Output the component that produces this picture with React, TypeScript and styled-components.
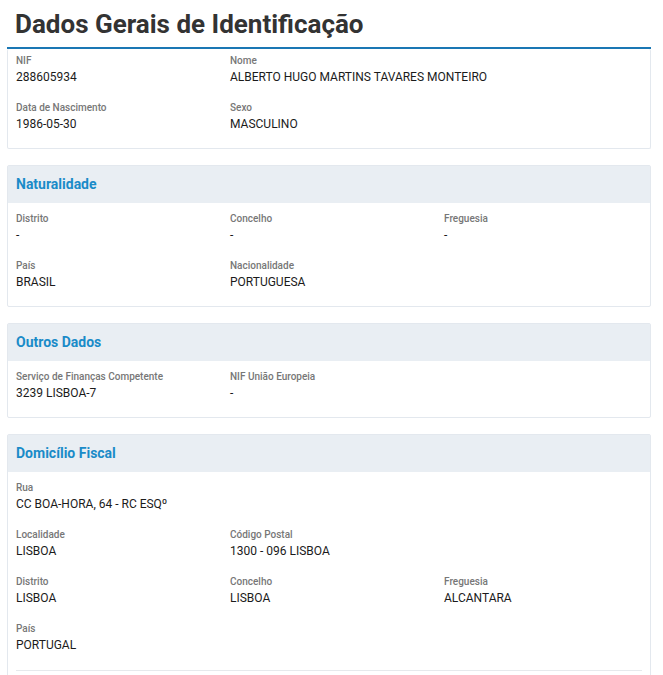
import React from "react";
import styled, { createGlobalStyle } from "styled-components";

const Global = createGlobalStyle`
  body {
    margin: 0;
    background: #ffffff;
    font-family: Roboto, "Liberation Sans", sans-serif;
    color: #222;
  }
`;

const Page = styled.div`
  padding: 0 12px 0 7px;
  width: 663px;
  box-sizing: border-box;
`;

const Title = styled.h1`
  margin: 0;
  padding: 8px 0 7px 8px;
  font-size: 26px;
  line-height: 32px;
  font-weight: 700;
  color: #333;
  border-bottom: 2px solid #1a77b4;
`;

const Card = styled.section<{ $first?: boolean }>`
  border: 1px solid #e3e8ee;
  border-top: ${(p) => (p.$first ? "none" : "1px solid #e3e8ee")};
  border-radius: 2px;
  background: #fff;
  margin-bottom: 16px;
`;

const CardHeader = styled.div`
  background: #e9eef3;
  padding: 0 8px 2px;
  height: 37px;
  box-sizing: border-box;
  display: flex;
  align-items: center;
`;

const CardTitle = styled.h2`
  margin: 0;
  font-size: 14px;
  font-weight: 700;
  color: #1a8bc8;
`;

const CardBody = styled.div<{ $first?: boolean }>`
  display: flex;
  flex-direction: column;
  gap: 15px;
  padding: ${(p) => (p.$first ? "4px 0 16px" : "8px 0 16px")};
`;

const Row = styled.div`
  display: grid;
  grid-template-columns: repeat(3, 214px);
`;

const Field = styled.div`
  padding: 0 8px;
  display: flex;
  flex-direction: column;
  white-space: nowrap;
`;

const Label = styled.span`
  font-size: 10px;
  line-height: 16px;
  font-weight: 500;
  color: #777;
`;

const Value = styled.span`
  font-size: 12px;
  line-height: 16px;
  color: #1b1b1b;
`;

const Divider = styled.hr`
  margin: 2px 8px 0;
  border: none;
  border-top: 1px solid #e6e9ec;
`;

type F = [string, string];

const rows = (rs: F[][]) =>
  rs.map((r, i) => (
    <Row key={i}>
      {r.map(([l, v]) => (
        <Field key={l}>
          <Label>{l}</Label>
          <Value>{v}</Value>
        </Field>
      ))}
    </Row>
  ));

export default function App() {
  return (
    <Page>
      <Global />
      <Title>Dados Gerais de Identificação</Title>
      <Card $first>
        <CardBody $first>
          {rows([
            [["NIF", "288605934"], ["Nome", "ALBERTO HUGO MARTINS TAVARES MONTEIRO"]],
            [["Data de Nascimento", "1986-05-30"], ["Sexo", "MASCULINO"]],
          ])}
        </CardBody>
      </Card>
      <Card>
        <CardHeader>
          <CardTitle>Naturalidade</CardTitle>
        </CardHeader>
        <CardBody>
          {rows([
            [["Distrito", "-"], ["Concelho", "-"], ["Freguesia", "-"]],
            [["País", "BRASIL"], ["Nacionalidade", "PORTUGUESA"]],
          ])}
        </CardBody>
      </Card>
      <Card>
        <CardHeader>
          <CardTitle>Outros Dados</CardTitle>
        </CardHeader>
        <CardBody>
          {rows([[["Serviço de Finanças Competente", "3239 LISBOA-7"], ["NIF União Europeia", "-"]]])}
        </CardBody>
      </Card>
      <Card>
        <CardHeader>
          <CardTitle>Domicílio Fiscal</CardTitle>
        </CardHeader>
        <CardBody>
          {rows([
            [["Rua", "CC BOA-HORA, 64 - RC ESQº"]],
            [["Localidade", "LISBOA"], ["Código Postal", "1300 - 096 LISBOA"]],
            [["Distrito", "LISBOA"], ["Concelho", "LISBOA"], ["Freguesia", "ALCANTARA"]],
            [["País", "PORTUGAL"]],
          ])}
          <Divider />
        </CardBody>
      </Card>
    </Page>
  );
}
